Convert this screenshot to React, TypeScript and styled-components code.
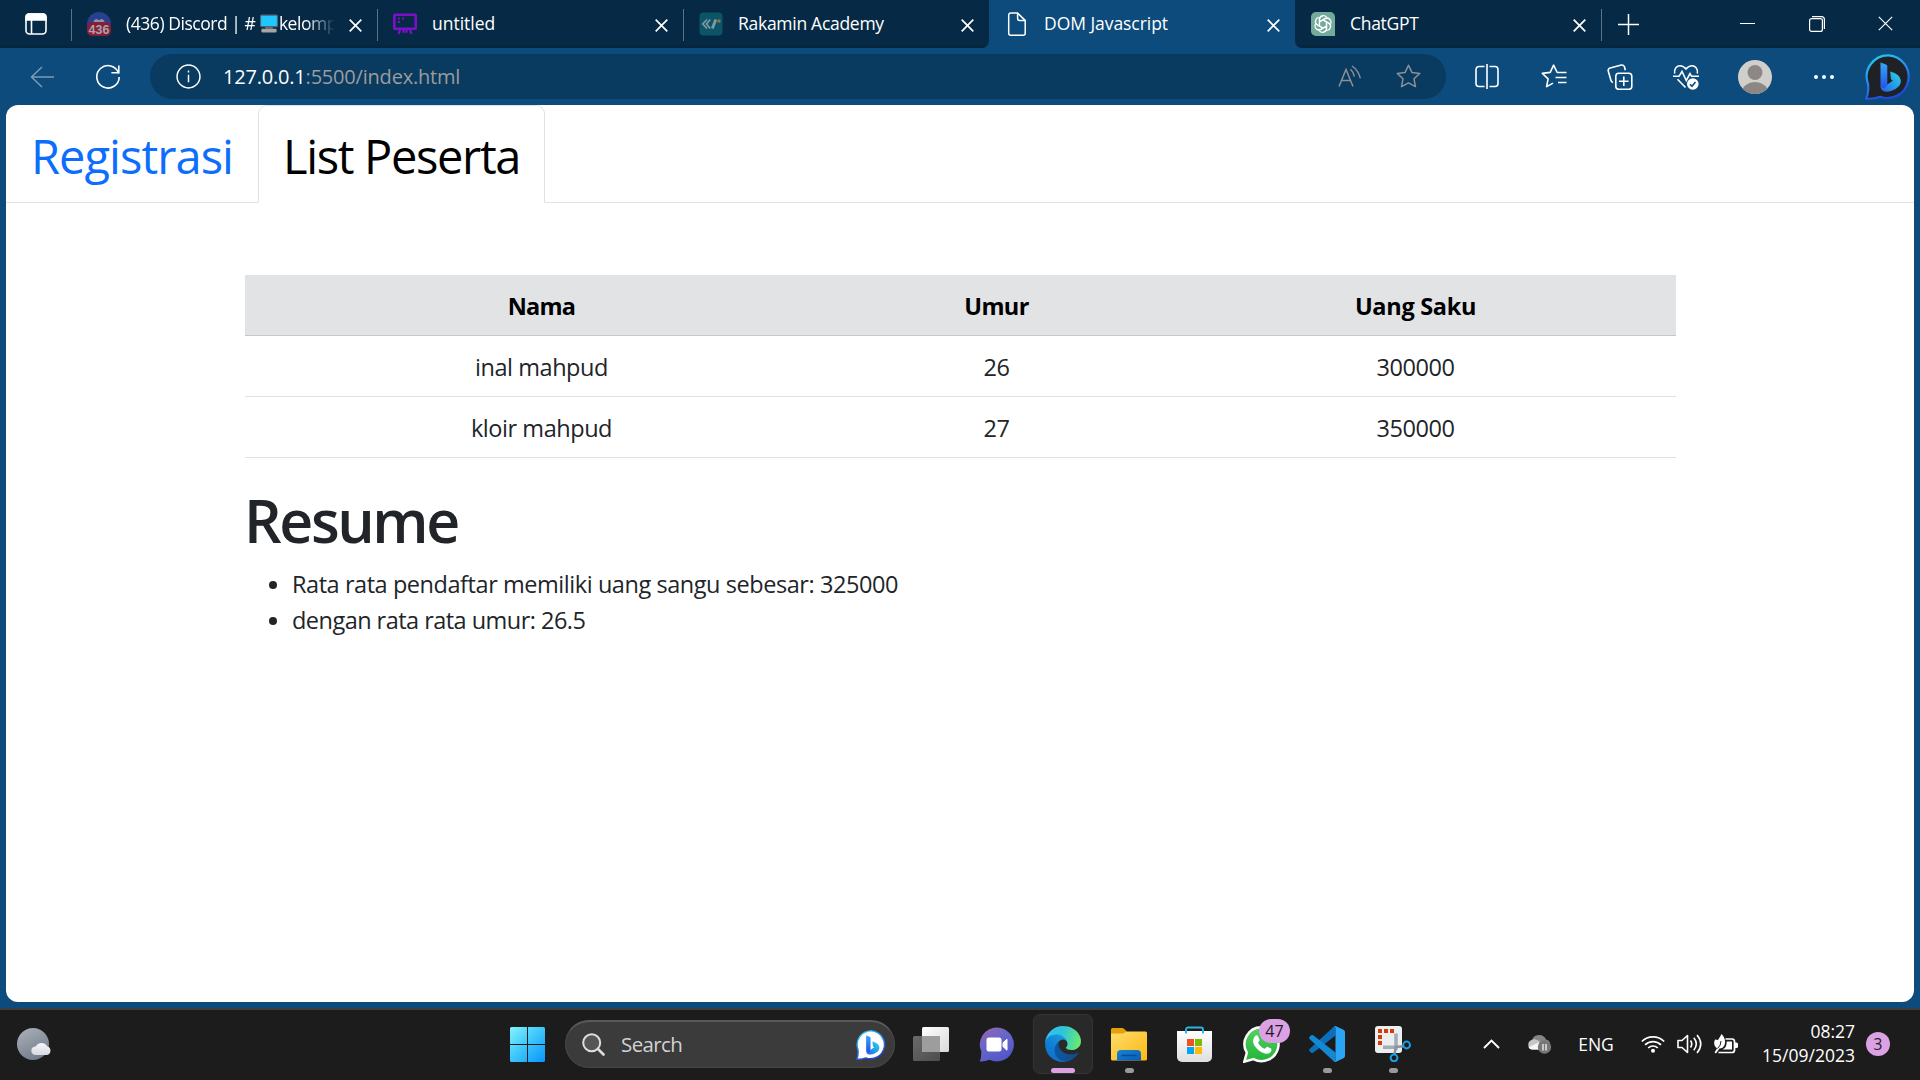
import React from 'react';
import styled, { createGlobalStyle } from 'styled-components';

const GlobalStyle = createGlobalStyle`
  * { box-sizing: border-box; }
  html, body { margin: 0; padding: 0; }
  body {
    background: #0c4b7b;
    font-family: 'Open Sans', 'Noto Sans', sans-serif;
    overflow: hidden;
  }
  svg { display: block; flex: none; }
`;

const Screen = styled.div`
  width: 1920px;
  height: 1080px;
  display: flex;
  flex-direction: column;
  background: #0c4b7b;
  overflow: hidden;
`;

/* ---------- tab strip ---------- */

const TabStrip = styled.div`
  display: flex;
  height: 48px;
  background: #0c4b7b;
  color: #fff;
`;

const StripSegment = styled.div<{ $grow?: boolean; $side?: 'left' | 'right' }>`
  display: flex;
  flex: ${p => (p.$grow ? '1' : 'none')};
  background: linear-gradient(#062a45 44px, #05233a 48px);
  border-bottom-right-radius: ${p => (p.$side === 'left' ? '7px' : '0')};
  border-bottom-left-radius: ${p => (p.$side === 'right' ? '7px' : '0')};
`;

const WorkspaceButton = styled.div`
  display: flex;
  align-items: center;
  width: 71px;
  padding-left: 25px;
`;

const Tab = styled.div<{ $line?: boolean }>`
  display: flex;
  align-items: center;
  width: 306px;
  height: 48px;
  padding: 0 8px 0 15px;
  border-left: 1px solid transparent;
  border-image: ${p =>
    p.$line ? 'linear-gradient(transparent 10px, #5d7284 10px, #5d7284 40px, transparent 40px) 1' : 'none'};
`;

const ActiveTab = styled(Tab)`
  background: #0c4b7b;
  border-radius: 8px 8px 0 0;
`;

const TabTitle = styled.div<{ $ls?: number; $fade?: boolean }>`
  display: flex;
  align-items: center;
  width: 209px;
  margin-left: 15px;
  overflow: hidden;
  white-space: nowrap;
  font-size: 17.5px;
  line-height: 47px;
  letter-spacing: ${p => p.$ls ?? 0}px;
  padding-bottom: 1px;
  mask-image: ${p => (p.$fade ? 'linear-gradient(90deg, #000 180px, transparent 209px)' : 'none')};
`;

const CloseSlot = styled.div`
  display: flex;
  justify-content: center;
  width: 28px;
  margin-left: 7px;
  padding-top: 2px;
`;

const NewTab = styled.div`
  display: flex;
  align-items: center;
  width: 112px;
  padding-left: 16px;
  border-left: 1px solid transparent;
  border-image: linear-gradient(transparent 10px, #5d7284 10px, #5d7284 40px, transparent 40px) 1;
`;

const WindowButton = styled.div`
  display: flex;
  align-items: center;
  justify-content: center;
  width: 69px;
  height: 47px;
`;

/* ---------- toolbar ---------- */

const Toolbar = styled.div`
  display: flex;
  align-items: center;
  height: 57px;
  background: #0c4b7b;
`;

const NavSlot = styled.div<{ $w: number }>`
  display: flex;
  align-items: center;
  justify-content: center;
  width: ${p => p.$w}px;
`;

const NavGroup = styled.div`
  display: flex;
  width: 150px;
  padding-left: 9px;
`;

const AddressBar = styled.div`
  display: flex;
  align-items: center;
  width: 1296px;
  height: 45px;
  margin-right: 8px;
  padding: 0 25px 0 26px;
  border-radius: 23px;
  background: #093a5f;
`;

const Url = styled.div`
  flex: 1;
  margin-left: 22px;
  font-size: 20px;
  line-height: 44px;
  letter-spacing: -0.2px;
  color: #9c9c9c;
`;

const Host = styled.span`
  color: #fff;
`;

const AddressIcons = styled.div`
  display: flex;
  align-items: center;
  gap: 34px;
`;

/* ---------- page ---------- */

const Viewport = styled.main`
  height: 897px;
  margin: 0 6px;
  background: #fff;
  border-radius: 12px;
  overflow: hidden;
  color: #212529;
`;

const NavTabs = styled.nav`
  display: flex;
  height: 98px;
  border-bottom: 1px solid #dee2e6;
`;

const NavLink = styled.a<{ $active?: boolean; $w: number; $ls: number }>`
  width: ${p => p.$w}px;
  height: 98px;
  padding: 14px 0 0 24px;
  border: 1px solid;
  border-color: ${p => (p.$active ? '#dee2e6 #dee2e6 #fff' : 'transparent transparent #dee2e6')};
  border-radius: ${p => (p.$active ? '9px 9px 0 0' : '0')};
  background: ${p => (p.$active ? '#fff' : 'transparent')};
  color: ${p => (p.$active ? '#000' : '#0d6efd')};
  font-size: 47px;
  line-height: 72px;
  letter-spacing: ${p => p.$ls}px;
  white-space: nowrap;
`;

const Container = styled.section`
  width: 1431px;
  margin: 72px 0 0 239px;
`;

const Table = styled.table`
  width: 100%;
  table-layout: fixed;
  border-collapse: separate;
  border-spacing: 0;
  text-align: center;
  font-size: 23.5px;
  line-height: 36px;
  letter-spacing: -0.45px;
`;

const Th = styled.th<{ $w: number; $ls: number }>`
  width: ${p => p.$w}px;
  height: 61px;
  padding: 2px 0 0;
  background: #e2e3e5;
  border-bottom: 1px solid #c6c7c8;
  color: #000;
  font-weight: 700;
  letter-spacing: ${p => p.$ls}px;
`;

const Td = styled.td`
  height: 61px;
  padding: 1px 0 0;
  border-bottom: 1px solid #dee2e6;
`;

const Heading = styled.h1`
  margin: 26px 0 10px -1px;
  font-size: 59px;
  font-weight: 560;
  line-height: 72px;
  letter-spacing: -2.4px;
`;

const SummaryList = styled.ul`
  margin: 0;
  padding-left: 47px;
  font-size: 23.5px;
  line-height: 36px;
`;

const SummaryItem = styled.li<{ $ls: number }>`
  letter-spacing: ${p => p.$ls}px;
`;

/* ---------- taskbar ---------- */

const Taskbar = styled.footer`
  display: flex;
  align-items: center;
  height: 72px;
  margin-top: 6px;
  padding-bottom: 2px;
  border-top: 2px solid #3d3d40;
  background: #1c1c1c;
  color: #fff;
`;

const WeatherSlot = styled.div`
  width: 494px;
  padding-left: 17px;
`;

const AppSlot = styled.div`
  display: flex;
  flex: none;
  position: relative;
  align-items: center;
  justify-content: center;
  width: 66px;
  height: 68px;
`;

const ActiveApp = styled.div`
  display: flex;
  align-items: center;
  justify-content: center;
  width: 60px;
  height: 60px;
  border: 1px solid #343434;
  border-radius: 7px;
  background: #292929;
`;

const Indicator = styled.i<{ $active?: boolean }>`
  position: absolute;
  bottom: 5px;
  width: ${p => (p.$active ? 24 : 9)}px;
  height: 5px;
  border-radius: 3px;
  background: ${p => (p.$active ? '#dca0e4' : '#9a9a9a')};
`;

const CountBadge = styled.span`
  position: absolute;
  top: 9px;
  left: 31px;
  width: 31px;
  height: 24px;
  border-radius: 12px;
  background: #dca0e4;
  color: #1c1c1c;
  font-size: 16px;
  line-height: 24px;
  text-align: center;
`;

const SearchBox = styled.div`
  display: flex;
  align-items: center;
  width: 330px;
  height: 48px;
  margin: 0 3px 0 5px;
  padding: 0 8px 0 16px;
  border: 1px solid #484848;
  border-top: 2px solid #5a5a5a;
  border-radius: 24px;
  background: #3b3b3b;
`;

const SearchLabel = styled.span`
  flex: 1;
  margin: 0 0 2px 16px;
  color: #d2d2d2;
  font-size: 20.5px;
  letter-spacing: -0.6px;
`;

const Tray = styled.div`
  display: flex;
  align-items: center;
  margin-left: 32px;
  font-size: 17.5px;
`;

const TraySlot = styled.div<{ $w: number }>`
  display: flex;
  align-items: center;
  justify-content: center;
  width: ${p => p.$w}px;
`;

const Clock = styled.div`
  width: 113px;
  margin-bottom: 2px;
  text-align: right;
  line-height: 24px;
`;

const Notifications = styled.div`
  width: 24px;
  height: 24px;
  margin-left: 11px;
  border-radius: 50%;
  background: #dca0e4;
  color: #1c1c1c;
  font-size: 15.5px;
  line-height: 24px;
  text-align: center;
`;

/* ---------- drawings ---------- */

const Close = ({ size = 13, w = 1.7 }: { size?: number; w?: number }) => (
  <svg width={size} height={size} viewBox="0 0 13 13" stroke="#fff" strokeWidth={w}>
    <path d="M.7.7l11.6 11.6M12.3.7L.7 12.3" />
  </svg>
);

const WorkspaceIcon = () => (
  <svg width="22" height="22" viewBox="0 0 22 22" fill="none" stroke="#fff" strokeWidth="1.6">
    <rect x="1" y="1" width="20" height="20" rx="3.5" />
    <path d="M1 4a3 3 0 0 1 3-3h14a3 3 0 0 1 3 3v3H1z" fill="#fff" />
    <path d="M6.5 7v14" />
  </svg>
);

const DiscordFavicon = () => (
  <svg width="24" height="24" viewBox="0 0 24 24">
    <circle cx="12" cy="12" r="12" fill="#2a3f8e" />
    <path d="M6 11q1-4 4-4l1 1h2l1-1q3 0 4 4z" fill="#8b94a8" />
    <rect y="10" width="24" height="14" rx="5" fill="#861f35" />
    <text x="12" y="22" textAnchor="middle" fontFamily="Liberation Sans" fontWeight="700" fontSize="12.5" fill="#a9a3ad">436</text>
  </svg>
);

const Computer = () => (
  <svg width="18" height="19" viewBox="0 0 19 19">
    <rect x=".6" y=".6" width="17.8" height="12.2" rx="1" fill="#1ec8ff" stroke="#53606d" strokeWidth="1.2" />
    <path d="M5.5 13h8v2h-8z" fill="#6b7076" />
    <rect x="1.5" y="15" width="16" height="4" rx="1" fill="#a5a5a5" />
  </svg>
);

const MonitorFavicon = () => (
  <svg width="24" height="24" viewBox="0 0 24 24" fill="none" stroke="#7a10c8" strokeWidth="2.6">
    <rect x="1.3" y="2.8" width="21.4" height="14" rx=".6" />
    <path d="M7.2 17l-1.6 5M10.5 17.5v3.2M13.5 17.5v3.2M16.8 17l1.6 5" strokeWidth="2.4" />
    <path d="M5 6.5h2M9 6.5h2M5 10h2" strokeWidth="2" />
  </svg>
);

const RakaminFavicon = () => (
  <svg width="24" height="24" viewBox="0 0 24 24" fill="none">
    <rect x=".5" y=".5" width="23" height="23" rx="4" fill="#0c5567" />
    <path d="M8 7.500L3.800 12 8 16.500M11.200 7.500L7.500 12l3.700 4.500" stroke="#8298a2" strokeWidth="1.700" />
    <path d="M16.800 7.500l-3.400 9" stroke="#8298a2" strokeWidth="2.800" />
    <circle cx="20" cy="9" r="1.800" fill="#88783b" />
  </svg>
);

const FileIcon = () => (
  <svg width="24" height="24" viewBox="0 0 24 24" fill="none" stroke="#fff" strokeWidth="1.5" strokeLinejoin="round">
    <path d="M5.7.9h6.6L20.2 8.4v12.8a2 2 0 0 1-2 2H5.7a2 2 0 0 1-2-2V2.9a2 2 0 0 1 2-2z" />
    <path d="M12.6 1v5.4a2 2 0 0 0 2 2h5.4" />
  </svg>
);

const GptFavicon = () => (
  <svg width="24" height="24" viewBox="0 0 24 24" fill="none">
    <path d="M5 0h14a5 5 0 0 1 5 5v19H5a5 5 0 0 1-5-5V5a5 5 0 0 1 5-5z" fill="#74aa9c" />
    <g stroke="#fff" strokeWidth="1.15">
      {[0, 60, 120, 180, 240, 300].map(a => (
        <path key={a} transform={`rotate(${a} 12 12)`} d="M8.6 14V7.4a3.9 3.9 0 0 1 7-2.2M8.6 9.7l5.3-3.1a3.9 3.9 0 0 1 5.2 1.2" />
      ))}
    </g>
  </svg>
);

const Plus = () => (
  <svg width="21" height="21" viewBox="0 0 21 21" stroke="#fff" strokeWidth="1.5">
    <path d="M10.5 0v21M0 10.5h21" />
  </svg>
);

const Minimize = () => (
  <svg width="15" height="15" viewBox="0 0 15 15" stroke="#fff"><path d="M0 7.5h15" /></svg>
);

const Restore = () => (
  <svg width="16" height="16" viewBox="0 0 16 16" fill="none" stroke="#fff" strokeWidth="1.2">
    <rect x=".6" y="2.6" width="12.8" height="12.8" rx="2" />
    <path d="M3 .6h9.4a3 3 0 0 1 3 3V13" />
  </svg>
);

const BackIcon = () => (
  <svg width="24" height="22" viewBox="0 0 24 22" fill="none" stroke="#7b9bb7" strokeWidth="1.5">
    <path d="M12 1L1.5 11 12 21M1.5 11H24" />
  </svg>
);

const ReloadIcon = () => (
  <svg width="26" height="26" viewBox="0 0 26 26" fill="none" stroke="#fff" strokeWidth="1.6">
    <path d="M23.6 9.2A11.2 11.2 0 1 0 24.2 13" />
    <path d="M23.8 1.4v7.4h-7.4" />
  </svg>
);

const InfoIcon = () => (
  <svg width="25" height="25" viewBox="0 0 24 24" fill="none" stroke="#fff" strokeWidth="1.4">
    <circle cx="12" cy="12" r="11" />
    <path d="M12 10.3v7.2M12 6.3v1.8" />
  </svg>
);

const ReadAloudIcon = () => (
  <svg width="24" height="24" viewBox="0 0 24 24" fill="none" stroke="#8b9196" strokeWidth="1.5">
    <path d="M1 21.500L8 4.500 15 21.500M3.500 15.500h9M12.500 4.300q3 2.800 3.800 7.200M14 1q6.300 4.200 8.300 12.200" />
  </svg>
);

const star = 'M12.5 1.2l3.4 7.2 7.9 1-5.8 5.4 1.5 7.8-7-3.8-7 3.8 1.5-7.8L1.2 9.4l7.9-1z';

const StarIcon = () => (
  <svg width="25" height="25" viewBox="0 0 25 25" fill="none" stroke="#8b9196" strokeWidth="1.5" strokeLinejoin="round">
    <path d={star} />
  </svg>
);

const SplitIcon = () => (
  <svg width="24" height="25" viewBox="0 0 24 25" fill="none" stroke="#fff" strokeWidth="1.6">
    <path d="M9.5 2.5H4A3 3 0 0 0 1 5.500v14a3 3 0 0 0 3 3h5.500M14.500 2.500H20a3 3 0 0 1 3 3v14a3 3 0 0 1-3 3h-5.500M12 0v25" />
  </svg>
);

const FavoritesIcon = () => (
  <svg width="26" height="25" viewBox="0 0 26 25" fill="none" stroke="#fff" strokeWidth="1.6" strokeLinejoin="round">
    <path d="M18 8.500h-1.800L12.600 1.200 9.200 8.400l-7.900 1 5.800 5.400-1.500 7.800 6.500-3.500M17 8.500h8.500M14.500 13.500h11M17 18.500h8.500" />
  </svg>
);

const CollectionsIcon = () => (
  <svg width="26" height="26" viewBox="0 0 26 26" fill="none" stroke="#fff" strokeWidth="1.600">
    <rect x="8.800" y="9.300" width="16" height="16" rx="3" />
    <path d="M16.800 12.500v9.600M12 17.300h9.600M18.300 6.200L17.500 3a2.600 2.600 0 0 0-3.200-1.900L3.200 4A2.600 2.600 0 0 0 1.300 7.200L4 16.500a3 3 0 0 0 2 2" />
  </svg>
);

const EssentialsIcon = () => (
  <svg width="26" height="26" viewBox="0 0 26 26" fill="none" stroke="#fff" strokeWidth="1.600">
    <path d="M1.700 9.500C.8 4.500 4 1.700 7 1.700c2.800 0 4.600 1.500 6 3.300 1.400-1.800 3.200-3.300 6-3.300 3 0 6.200 2.800 5.300 7.800" />
    <path d="M0 12.300h6l3-4.800 4.300 9 3.700-6.800 1.600 2.600H26M4.500 15.300l8 8.200" />
    <circle cx="19.800" cy="20" r="5.800" fill="#fff" stroke="none" />
    <path d="M17 20.300l2 2 3.500-4.200" stroke="#0c4b7b" />
  </svg>
);

const Avatar = () => (
  <svg width="34" height="34" viewBox="0 0 34 34">
    <clipPath id="avatarClip"><circle cx="17" cy="17" r="17" /></clipPath>
    <g clipPath="url(#avatarClip)">
      <rect width="34" height="34" fill="#d1cfcc" />
      <circle cx="17" cy="12.500" r="7.500" fill="#8c8784" />
      <ellipse cx="17" cy="32" rx="13" ry="10" fill="#8c8784" />
    </g>
  </svg>
);

const Dots = () => (
  <svg width="20" height="4" viewBox="0 0 20 4" fill="#fff">
    <circle cx="2" cy="2" r="2" /><circle cx="10" cy="2" r="2" /><circle cx="18" cy="2" r="2" />
  </svg>
);

const Bing = ({ size, id, fill }: { size: number; id: string; fill: string }) => (
  <svg width={size} height={size} viewBox="0 0 46 46">
    <defs>
      <linearGradient id={`${id}r`} x1="0" y1="0" x2=".4" y2="1">
        <stop stopColor="#25d0ee" /><stop offset=".5" stopColor="#2692f4" /><stop offset="1" stopColor="#1f48dc" />
      </linearGradient>
      <linearGradient id={`${id}s`} x1="0" y1="0" x2="0" y2="1">
        <stop stopColor="#37a7fa" /><stop offset="1" stopColor="#2352e8" />
      </linearGradient>
      <linearGradient id={`${id}t`} x1="0" y1="1" x2="1" y2="0">
        <stop stopColor="#2560ec" /><stop offset="1" stopColor="#28d8e6" />
      </linearGradient>
    </defs>
    <path d="M23.500 1.300a21.400 21.400 0 1 1-8.500 41.500Q8.500 45.300 1.300 44.600 4 39 3 30A21.400 21.400 0 0 1 23.500 1.300z" fill={fill} stroke={`url(#${id}r)`} strokeWidth="2.200" />
    <path d="M25.200 17.500q9.800 2.600 10.600 8.800.5 5.300-5.300 8.600-7.500 4.300-12.200 2.100-3-1.800-2.800-5.500 3.500 1.300 6.500-.7l6-4.300q-1.600-.4-2.100-1.800z" fill={`url(#${id}t)`} />
    <path d="M15.500 8.500l5.500 2q1.300.6 1.300 2v17.300q0 3.200-3.300 4.700-3.500-.3-3.500-4.200z" fill={`url(#${id}s)`} />
  </svg>
);

const WeatherIcon = () => (
  <svg width="36" height="34" viewBox="0 0 36 34">
    <defs>
      <linearGradient id="moon" x1=".2" y1="0" x2=".7" y2="1"><stop stopColor="#a7afba" /><stop offset="1" stopColor="#717a87" /></linearGradient>
      <linearGradient id="moonCloud" x1="0" y1="0" x2="0" y2="1"><stop stopColor="#f5f7fa" /><stop offset="1" stopColor="#d6dbe2" /></linearGradient>
    </defs>
    <circle cx="16" cy="17" r="16" fill="url(#moon)" />
    <path d="M18.500 28a4.300 4.300 0 0 1 .2-8.600 6.500 6.500 0 0 1 11.500-.1 4.500 4.500 0 0 1-.2 8.700z" fill="url(#moonCloud)" />
  </svg>
);

const StartIcon = () => (
  <svg width="35" height="35" viewBox="0 0 35 35">
    <defs><linearGradient id="win" x1="0" y1="0" x2="35" y2="35" gradientUnits="userSpaceOnUse"><stop stopColor="#84f4fd" /><stop offset=".5" stopColor="#3cc4fb" /><stop offset="1" stopColor="#0995fb" /></linearGradient></defs>
    <path d="M1.500 0H17v17H0V1.500A1.500 1.500 0 0 1 1.500 0zM18 0h15.500A1.500 1.500 0 0 1 35 1.500V17H18zM0 18h17v17H1.500A1.500 1.500 0 0 1 0 33.500zM18 18h17v15.500a1.500 1.500 0 0 1-1.500 1.500H18z" fill="url(#win)" />
  </svg>
);

const SearchIcon = () => (
  <svg width="23" height="23" viewBox="0 0 23 23" fill="none" stroke="#dedede" strokeLinecap="round">
    <circle cx="9.700" cy="9.700" r="8.500" fill="#555" strokeWidth="2" />
    <path d="M16 16l5.500 5.500" strokeWidth="2.600" />
  </svg>
);

const TaskViewIcon = () => (
  <svg width="36" height="34" viewBox="0 0 36 34">
    <defs>
      <linearGradient id="tvA" x1="0" y1="0" x2="1" y2="1"><stop stopColor="#fff" /><stop offset="1" stopColor="#d9d9d9" /></linearGradient>
      <linearGradient id="tvB" x1="0" y1="0" x2="1" y2="1"><stop stopColor="#6a6a6a" /><stop offset="1" stopColor="#4d4d4d" /></linearGradient>
    </defs>
    <rect y="9" width="27" height="25" rx="1.500" fill="url(#tvB)" />
    <rect x="9" width="27" height="25" rx="1.500" fill="url(#tvA)" />
    <path d="M9 9h18v16H10.500A1.500 1.500 0 0 1 9 23.500z" fill="#9d9d9d" />
  </svg>
);

const ChatIcon = () => (
  <svg width="37" height="35" viewBox="0 0 37 35">
    <defs><linearGradient id="chat" x1="0" y1="0" x2=".6" y2="1"><stop stopColor="#9a66ad" /><stop offset=".45" stopColor="#6a67c8" /><stop offset="1" stopColor="#5257c8" /></linearGradient></defs>
    <path d="M18 .5a17 17 0 1 1-7.500 32.300Q5.500 35 .7 34.500 2.500 31 2.300 24.500A17 17 0 0 1 18 .5z" fill="url(#chat)" />
    <rect x="7.500" y="10.500" width="15" height="14" rx="2.500" fill="#fff" />
    <path d="M24 15.800l4-3.600v11l-4-3.600z" fill="#fff" stroke="#fff" strokeLinejoin="round" />
  </svg>
);

const EdgeIcon = () => (
  <svg width="36" height="36" viewBox="0 0 256 256">
    <defs>
      <linearGradient id="eA" x1="0" y1="0" x2="1" y2="0"><stop stopColor="#0c59a4" /><stop offset="1" stopColor="#114a8b" /></linearGradient>
      <linearGradient id="eB" x1=".7" y1="0" x2=".2" y2="1"><stop stopColor="#1b9de2" /><stop offset=".5" stopColor="#0f7fd6" /><stop offset="1" stopColor="#0f6cc4" /></linearGradient>
      <linearGradient id="eC" x1="0" y1=".3" x2="1" y2=".5"><stop stopColor="#35c1f1" /><stop offset=".45" stopColor="#2fc2df" /><stop offset="1" stopColor="#66eb6e" /></linearGradient>
    </defs>
    <path d="M231 190.500c-3.400 1.800-6.900 3.400-10.500 4.700a101.900 101.900 0 0 1-35.900 6.500c-47.300 0-88.500-32.500-88.500-74.300a31.500 31.500 0 0 1 16.400-27.300c-42.800 1.800-53.800 46.400-53.800 72.500 0 73.900 68.100 81.400 82.800 81.400 7.900 0 19.800-2.300 27-4.600l1.300-.4a128.300 128.300 0 0 0 66.600-52.800 4 4 0 0 0-5.400-5.700z" fill="url(#eA)" />
    <path d="M105.700 241.400a79.200 79.200 0 0 1-22.700-21.300 80.700 80.700 0 0 1 29.500-120c3.200-1.500 8.500-4.100 15.600-4a32.400 32.400 0 0 1 25.700 13 31.900 31.900 0 0 1 6.300 18.700c0-.2 24.500-79.600-80-79.600-43.900 0-80 41.700-80 78.200a130.200 130.200 0 0 0 12.100 56 128 128 0 0 0 156.400 67 75.500 75.500 0 0 1-62.800-8z" fill="url(#eB)" />
    <path d="M152.300 148.900c-.9 1-3.400 2.500-3.400 5.600 0 2.600 1.700 5.200 4.800 7.300 14.300 10 41.400 8.600 41.500 8.600a59.600 59.600 0 0 0 30.300-8.300 61.400 61.400 0 0 0 30.400-52.900c.3-22.400-8-37.300-11.300-43.900C223.500 23.900 177.700 0 128 0A128 128 0 0 0 0 126.200c.5-36.500 36.800-66 80-66 3.500 0 23.500.3 42 10.100 16.300 8.600 24.900 19 30.800 29.200 6.200 10.700 7.300 24.100 7.300 29.500s-2.700 13.300-7.800 19.900z" fill="url(#eC)" />
  </svg>
);

const FolderIcon = () => (
  <svg width="36" height="34" viewBox="0 0 36 34">
    <defs>
      <linearGradient id="fA" x1="0" y1="0" x2="1" y2="1"><stop stopColor="#ffdc6c" /><stop offset="1" stopColor="#f9b812" /></linearGradient>
      <linearGradient id="fB" x1="0" y1="0" x2="1" y2="1"><stop stopColor="#1484d9" /><stop offset="1" stopColor="#0c5bb0" /></linearGradient>
    </defs>
    <path d="M1.500 1H12l4 3.500V9H0V2.500A1.500 1.500 0 0 1 1.500 1z" fill="#e3a009" />
    <path d="M0 6.500h12l4-2h18.500A1.500 1.500 0 0 1 36 6v26a1.500 1.500 0 0 1-1.500 1.500h-33A1.500 1.500 0 0 1 0 32z" fill="url(#fA)" />
    <path d="M6 33.500V27a4 4 0 0 1 4-4h16a4 4 0 0 1 4 4v6.500z" fill="url(#fB)" />
    <path d="M11 28.500h14" stroke="#084a94" strokeWidth="1.500" strokeLinecap="round" />
  </svg>
);

const StoreIcon = () => (
  <svg width="37" height="36" viewBox="0 0 37 36">
    <defs><linearGradient id="bag" x1="0" y1="0" x2="0" y2="1"><stop stopColor="#fff" /><stop offset="1" stopColor="#dfdfdf" /></linearGradient></defs>
    <path d="M0 5h35v26a5 5 0 0 1-5 5H5a5 5 0 0 1-5-5z" fill="url(#bag)" />
    <path d="M9 7.500V3.500a2 2 0 0 1 2-2h13a2 2 0 0 1 2 2v4" fill="none" stroke="#2ab3ea" strokeWidth="1.900" />
    <path d="M10 13h7v7h-7z" fill="#f15022" /><path d="M18 13h7v7h-7z" fill="#80bb03" />
    <path d="M10 21h7v7h-7z" fill="#03a5f0" /><path d="M18 21h7v7h-7z" fill="#ffba08" />
  </svg>
);

const WhatsAppIcon = () => (
  <svg width="37" height="37" viewBox="0 0 36 36">
    <defs><linearGradient id="wa" x1="0" y1="0" x2="0" y2="1"><stop stopColor="#57d163" /><stop offset="1" stopColor="#23b33a" /></linearGradient></defs>
    <path d="M18.200 1.200a16.500 16.500 0 1 1-8 31L1.300 34.700 3.700 26A16.500 16.500 0 0 1 18.200 1.200z" fill="url(#wa)" stroke="#fff" strokeWidth="2.400" />
    <path d="M12 9.500c1-.9 2.200-.5 2.600.4l1.500 3.500c.3.900-1.600 2.200-1.400 2.900 1.300 2.700 3.400 4.600 6.200 5.800.8.300 1.900-2 2.700-1.900l3.600 1.800c1.200.6.2 3.300-1.200 4.200-3 1.700-7 .3-10.500-2.300-3-2.400-5.500-5.600-5.700-8.500 0-2.500 1-4.500 2.200-5.900z" fill="#fff" />
  </svg>
);

const CodeIcon = () => (
  <svg width="36" height="36" viewBox="0 0 36 36">
    <path d="M26.500 0v9.500L4.200 26.700q-1 .8-2 0L.6 25.200q-1-1.100 0-2.200L25 .6z" fill="#0c6fb9" />
    <path d="M26.500 36v-9.500L4.200 9.300q-1-.8-2 0L.6 10.800q-1 1.100 0 2.200L25 35.400z" fill="#1489d3" />
    <path d="M25 .6q.8-.8 2-.4l7.500 3.500q1.500.8 1.500 2.300v24q0 1.500-1.500 2.300L27 35.800q-1.200.4-2-.4 1.500.6 1.500-1.400V2Q26.500 0 25 .6z" fill="#2aa5f3" />
  </svg>
);

const SnipIcon = () => (
  <svg width="36" height="36" viewBox="0 0 36 36" fill="none">
    <rect width="27" height="27" rx="3" fill="#eceff1" />
    <path d="M3 5h16.500" stroke="#d83b01" strokeWidth="4" strokeDasharray="4 2" />
    <path d="M5 9v11" stroke="#d83b01" strokeWidth="4" strokeDasharray="4 2" />
    <path d="M8 21.200h14.500M21 7.500V24" stroke="#a5adb4" strokeWidth="3.600" />
    <path d="M20 21l8-.8M21 20l-1.500 8" stroke="#8b949c" strokeWidth="2.600" />
    <circle cx="31.600" cy="19" r="3.400" stroke="#1c9de4" strokeWidth="2" />
    <circle cx="19" cy="31.800" r="3.400" stroke="#1c9de4" strokeWidth="2" />
  </svg>
);

const ChevronIcon = () => (
  <svg width="17" height="10" viewBox="0 0 17 10" fill="none" stroke="#fff" strokeWidth="1.900"><path d="M1 9l7.500-7.500L16 9" /></svg>
);

const CloudIcon = () => (
  <svg width="25" height="20" viewBox="0 0 25 20">
    <path d="M5 6A7.500 7.500 0 0 1 19 5.500q3.500.5 4 4l-3 4H9z" fill="#868686" />
    <path d="M5 15.500A5 5 0 0 1 4.500 6q3-1.500 6 .3L17 10l-5 5.500z" fill="#c6c6c6" />
    <path d="M1.500 13L12 8.500l3 7H5q-2.500 0-3.500-2.500z" fill="#f5f5f5" />
    <circle cx="17.500" cy="13" r="6.700" fill="#777" />
    <path d="M16 10v6.500M19 10v6.500" stroke="#fff" strokeWidth="1.200" />
  </svg>
);

const WifiIcon = () => (
  <svg width="24" height="18" viewBox="0 0 24 18" fill="none" stroke="#fff" strokeWidth="1.700">
    <path d="M.8 6.500a15.800 15.800 0 0 1 22.400 0M4 9.900a11.300 11.300 0 0 1 16 0M7.200 13a6.800 6.800 0 0 1 9.600 0" />
    <circle cx="12" cy="15.700" r="2" fill="#fff" stroke="none" />
  </svg>
);

const SpeakerIcon = () => (
  <svg width="25" height="20" viewBox="0 0 25 20" fill="none" stroke="#fff" strokeWidth="1.600" strokeLinejoin="round">
    <path d="M1 6.500h4L10.500 1.500v17L5 13.500H1zM13.500 6.500q2.500 3.500 0 7M16.800 3.800q5 6.200 0 12.400M20 1q7.500 9 0 18" />
  </svg>
);

const BatteryIcon = () => (
  <svg width="24" height="20" viewBox="0 0 24 20" fill="none">
    <path d="M11.500 5H18a2.500 2.500 0 0 1 2.500 2.500v8.500a2.500 2.500 0 0 1-2.500 2.500H4.500" stroke="#fff" strokeWidth="1.700" />
    <path d="M21 8.500h1.500q1.500 0 1.500 1.500v2.500q0 1.500-1.500 1.500H21z" fill="#fff" />
    <path d="M12.700 7.500H18v8H8.500q4.500-2 4.200-8z" fill="#fff" />
    <path d="M7.500 0Q12.500 5 10.500 11q-1.500 3.500-5 3.500L2 19.500.5 18.500 3 14.500Q-1.500 11 1 5.500l3 .5Q6 3 7.500 0z" fill="#fff" />
    <path d="M7 7q0 4.500-3.500 7.500" stroke="#1c1c1c" />
  </svg>
);

/* ---------- data ---------- */

const participants = [
  { nama: 'inal mahpud', umur: 26, uang: 300000 },
  { nama: 'kloir mahpud', umur: 27, uang: 350000 },
];

const average = (values: number[]) => values.reduce((a, b) => a + b, 0) / values.length;

export default function App() {
  return (
    <Screen>
      <GlobalStyle />
      <TabStrip>
        <StripSegment $side="left">
          <WorkspaceButton><WorkspaceIcon /></WorkspaceButton>
          <Tab $line>
            <DiscordFavicon />
            <TabTitle $ls={-0.45} $fade>(436) Discord | #&nbsp;<Computer />&#8202;kelomp</TabTitle>
            <CloseSlot><Close /></CloseSlot>
          </Tab>
          <Tab $line>
            <MonitorFavicon />
            <TabTitle>untitled</TabTitle>
            <CloseSlot><Close /></CloseSlot>
          </Tab>
          <Tab $line>
            <RakaminFavicon />
            <TabTitle $ls={-0.28}>Rakamin Academy</TabTitle>
            <CloseSlot><Close /></CloseSlot>
          </Tab>
        </StripSegment>
        <ActiveTab>
          <FileIcon />
          <TabTitle $ls={-0.05}>DOM Javascript</TabTitle>
          <CloseSlot><Close /></CloseSlot>
        </ActiveTab>
        <StripSegment $side="right" $grow>
          <Tab>
            <GptFavicon />
            <TabTitle $ls={-0.3}>ChatGPT</TabTitle>
            <CloseSlot><Close /></CloseSlot>
          </Tab>
          <NewTab><Plus /></NewTab>
          <WindowButton><Minimize /></WindowButton>
          <WindowButton><Restore /></WindowButton>
          <WindowButton><Close size={15} w={1} /></WindowButton>
        </StripSegment>
      </TabStrip>

      <Toolbar>
        <NavGroup>
          <NavSlot $w={66}><BackIcon /></NavSlot>
          <NavSlot $w={66}><ReloadIcon /></NavSlot>
        </NavGroup>
        <AddressBar>
          <InfoIcon />
          <Url><Host>127.0.0.1</Host>:5500/index.html</Url>
          <AddressIcons><ReadAloudIcon /><StarIcon /></AddressIcons>
        </AddressBar>
        <NavSlot $w={66}><SplitIcon /></NavSlot>
        <NavSlot $w={67}><FavoritesIcon /></NavSlot>
        <NavSlot $w={66}><CollectionsIcon /></NavSlot>
        <NavSlot $w={66}><EssentialsIcon /></NavSlot>
        <NavSlot $w={72}><Avatar /></NavSlot>
        <NavSlot $w={66}><Dots /></NavSlot>
        <NavSlot $w={62}><Bing size={46} id="bingBar" fill="#202124" /></NavSlot>
      </Toolbar>

      <Viewport>
        <NavTabs>
          <NavLink $w={252} $ls={-0.95}>Registrasi</NavLink>
          <NavLink $w={287} $ls={-1.35} $active>List Peserta</NavLink>
        </NavTabs>
        <Container>
          <Table>
            <thead>
              <tr>
                <Th $w={593} $ls={-0.8}>Nama</Th>
                <Th $w={317} $ls={-0.6}>Umur</Th>
                <Th $w={521} $ls={-0.3}>Uang Saku</Th>
              </tr>
            </thead>
            <tbody>
              {participants.map(p => (
                <tr key={p.nama}>
                  <Td>{p.nama}</Td>
                  <Td>{p.umur}</Td>
                  <Td>{p.uang}</Td>
                </tr>
              ))}
            </tbody>
          </Table>
          <Heading>Resume</Heading>
          <SummaryList>
            <SummaryItem $ls={-0.44}>Rata rata pendaftar memiliki uang sangu sebesar: {average(participants.map(p => p.uang))}</SummaryItem>
            <SummaryItem $ls={-0.53}>dengan rata rata umur: {average(participants.map(p => p.umur))}</SummaryItem>
          </SummaryList>
        </Container>
      </Viewport>

      <Taskbar>
        <WeatherSlot><WeatherIcon /></WeatherSlot>
        <AppSlot><StartIcon /></AppSlot>
        <SearchBox>
          <SearchIcon />
          <SearchLabel>Search</SearchLabel>
          <Bing size={30} id="bingSearch" fill="#fff" />
        </SearchBox>
        <AppSlot><TaskViewIcon /></AppSlot>
        <AppSlot><ChatIcon /></AppSlot>
        <AppSlot><ActiveApp><EdgeIcon /></ActiveApp><Indicator $active /></AppSlot>
        <AppSlot><FolderIcon /><Indicator /></AppSlot>
        <AppSlot><StoreIcon /></AppSlot>
        <AppSlot><WhatsAppIcon /><CountBadge>47</CountBadge></AppSlot>
        <AppSlot><CodeIcon /><Indicator /></AppSlot>
        <AppSlot><SnipIcon /><Indicator /></AppSlot>
        <Tray>
          <TraySlot $w={66}><ChevronIcon /></TraySlot>
          <TraySlot $w={31}><CloudIcon /></TraySlot>
          <TraySlot $w={82}>ENG</TraySlot>
          <TraySlot $w={32}><WifiIcon /></TraySlot>
          <TraySlot $w={40}><SpeakerIcon /></TraySlot>
          <TraySlot $w={33}><BatteryIcon /></TraySlot>
          <Clock>08:27<br />15/09/2023</Clock>
          <Notifications>3</Notifications>
        </Tray>
      </Taskbar>
    </Screen>
  );
}
